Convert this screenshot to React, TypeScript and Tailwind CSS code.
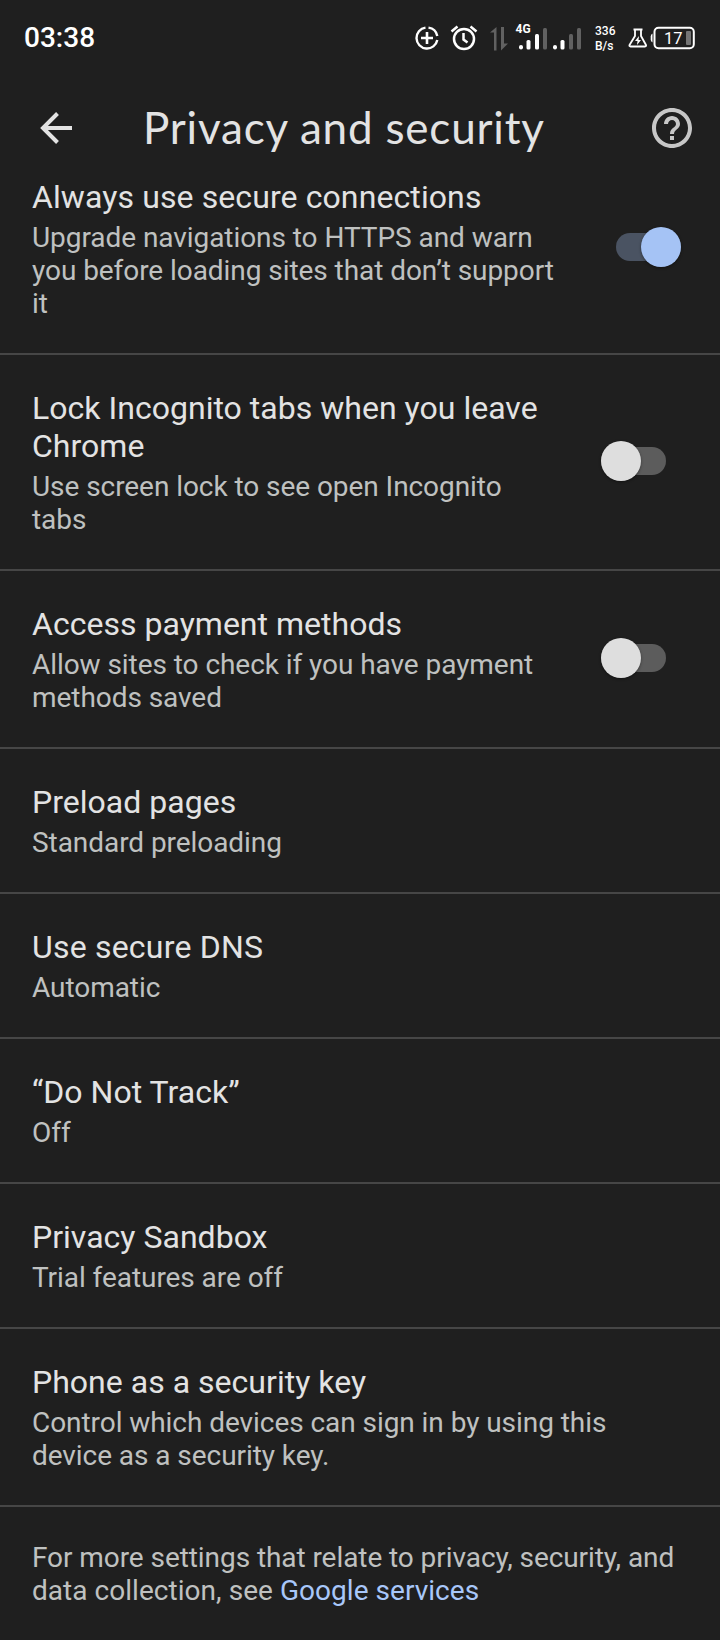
import type { ReactNode } from 'react';

function Switch({ on = false }: { on?: boolean }) {
  return on ? (
    <div className="-mt-1 mr-[39px] flex h-10 w-[65px] shrink-0 items-center">
      <div className="flex h-7 w-[65px] items-center justify-end rounded-full bg-[#4a5362]">
        <div className="size-10 shrink-0 rounded-full bg-[#a5c3f5] shadow-[0_1px_3px_rgba(0,0,0,0.4)]" />
      </div>
    </div>
  ) : (
    <div className="-mt-[3px] mr-[54px] flex h-10 w-[65px] shrink-0 items-center">
      <div className="flex h-7 w-[65px] items-center rounded-full bg-[#5c5c5c]">
        <div className="size-10 shrink-0 rounded-full bg-[#dedede] shadow-[0_1px_3px_rgba(0,0,0,0.4)]" />
      </div>
    </div>
  );
}

type RowProps = {
  title: ReactNode;
  lines: ReactNode;
  control?: ReactNode;
  spacing?: string;
  tracking?: string;
};

function Row({ title, lines, control, spacing = 'pt-[34px]', tracking = 'tracking-[0.02px]' }: RowProps) {
  return (
    <section className={'flex shrink-0 items-center justify-between border-b-2 border-[#464646] pb-[33px] pl-8 ' + spacing}>
      <div className="whitespace-nowrap">
        <h2 className={'text-[32px] leading-[38px] text-[#e3e3e3] ' + tracking}>{title}</h2>
        <p className="mt-[5px] text-[28px] leading-[33px] tracking-[-0.06px] text-[#bfc1c0]">{lines}</p>
      </div>
      {control}
    </section>
  );
}

function StatusBar() {
  return (
    <div className="flex h-[76px] shrink-0 items-center justify-between pl-6 pr-6 text-white">
      <span className="text-[28px] font-medium leading-none">03:38</span>
      <svg width="284" height="40" viewBox="412 16 284 40" fill="none" stroke="#fff" fontFamily="Roboto, sans-serif">
        <path d="M425.500 25.600A10.500 10.500 0 1 0 437.300 38M428.500 25.600A10.500 10.500 0 0 1 437.300 34" strokeWidth="2.400" />
        <path d="M427 30v12M421 36h12" strokeWidth="2.600" />
        <circle cx="464" cy="37" r="10" strokeWidth="2.500" />
        <path d="M463.500 31v6.500l4 3M451.500 29.500l6-5M476.500 29.500l-6-5" strokeWidth="2.500" />
        <path d="M490 30.500L496.500 25v23.500h-2.500V30.500zM501 25v23.500l7-7h-4V25z" fill="#616161" stroke="none" />
        <text x="515.500" y="31" fontSize="12" fontWeight="700" fill="#fff" stroke="none">4G</text>
        <g stroke="none" fill="#fff">
          <rect x="519" y="43" width="4" height="4.500" rx="2" />
          <rect x="526.500" y="38" width="4" height="9.500" rx="1.500" />
          <rect x="535" y="32" width="4" height="15.500" rx="1.500" />
          <rect x="543" y="26" width="4" height="21.500" rx="1.500" fill="#616161" />
          <rect x="553" y="43" width="4" height="4.500" rx="2" />
          <rect x="560.500" y="38" width="4" height="9.500" rx="1.500" />
          <rect x="569" y="32" width="4" height="15.500" rx="1.500" fill="#616161" />
          <rect x="577" y="26" width="4" height="21.500" rx="1.500" fill="#616161" />
          <text x="595" y="33" fontSize="12" fontWeight="500">336</text>
          <text x="595" y="48" fontSize="12" fontWeight="500">B/s</text>
        </g>
        <path d="M633.500 27.500h9M635 28v6l-5.500 9q-.5 1.500 1 1.500h14.500q1.500 0 1-1.500L641 34v-6" strokeWidth="1.800" strokeLinejoin="round" />
        <path d="M639 34l-4 5h2.500l-.5 4 4-5h-2.500z" fill="#fff" stroke="none" />
        <path d="M652.500 31.500q-1.800 1-1.800 3v3q0 2 1.800 3z" fill="#fff" stroke="none" />
        <rect x="654.500" y="25.700" width="39.300" height="20.500" rx="4" strokeWidth="2" />
        <text x="664" y="42" fontSize="16.500" fill="#fff" stroke="none">17</text>
        <rect x="686" y="29" width="5" height="14" rx="1" fill="#757575" stroke="none" />
      </svg>
    </div>
  );
}

export default function App() {
  return (
    <main className="flex h-[1640px] w-[720px] flex-col overflow-hidden bg-[#1f1f1f] font-['Roboto',sans-serif]">
      <StatusBar />
      <header className="flex h-[108px] shrink-0 items-center pl-10 pr-7">
        <svg className="mt-[-5px] w-8 shrink-0" height="32" viewBox="0 0 32 32" fill="none" stroke="#e3e3e3" strokeWidth="4">
          <path d="M32 16H3M17.500 1.500L3 16l14.500 14.500" />
        </svg>
        <h1 className="ml-[71px] mt-[-7px] whitespace-nowrap font-['Lato',sans-serif] text-[44px] leading-[56px] tracking-[0.8px] text-[#e3e3e3]">Privacy and security</h1>
        <svg className="-mt-1 ml-auto shrink-0" width="40" height="40" viewBox="2 2 20 20" fill="#c7c7c7">
          <path d="M11 18h2v-2h-2v2zm1-16C6.480 2 2 6.480 2 12s4.480 10 10 10 10-4.480 10-10S17.520 2 12 2zm0 18c-4.410 0-8-3.590-8-8s3.590-8 8-8 8 3.590 8 8-3.590 8-8 8zm0-14c-2.210 0-4 1.790-4 4h2c0-1.100.9-2 2-2s2 .9 2 2c0 2-3 1.750-3 5h2c0-2.250 3-2.500 3-5 0-2.210-1.790-4-4-4z" />
        </svg>
      </header>
      <Row spacing="-mt-[6px]" tracking="tracking-[0.1px]" title="Always use secure connections" lines={<>Upgrade navigations to HTTPS and warn<br />you before loading sites that don’t support<br />it</>} control={<Switch on />} />
      <Row title={<>Lock Incognito tabs when you leave<br />Chrome</>} lines={<>Use screen lock to see open Incognito<br />tabs</>} control={<Switch />} />
      <Row title="Access payment methods" lines={<>Allow sites to check if you have payment<br />methods saved</>} control={<Switch />} />
      <Row title="Preload pages" lines="Standard preloading" />
      <Row tracking="tracking-[0.2px]" title="Use secure DNS" lines="Automatic" />
      <Row title="“Do Not Track”" lines="Off" />
      <Row title="Privacy Sandbox" lines="Trial features are off" />
      <Row title="Phone as a security key" lines={<>Control which devices can sign in by using this<br />device as a security key.</>} />
      <p className="whitespace-nowrap pl-8 pt-[34px] text-[28px] leading-[33px] text-[#bfc1c0]">
        <span className="tracking-[-0.07px]">For more settings that relate to privacy, security, and</span><br />
        <span className="tracking-[0.04px]">data collection, see <a className="text-[#a8c7fa]">Google services</a></span>
      </p>
    </main>
  );
}
